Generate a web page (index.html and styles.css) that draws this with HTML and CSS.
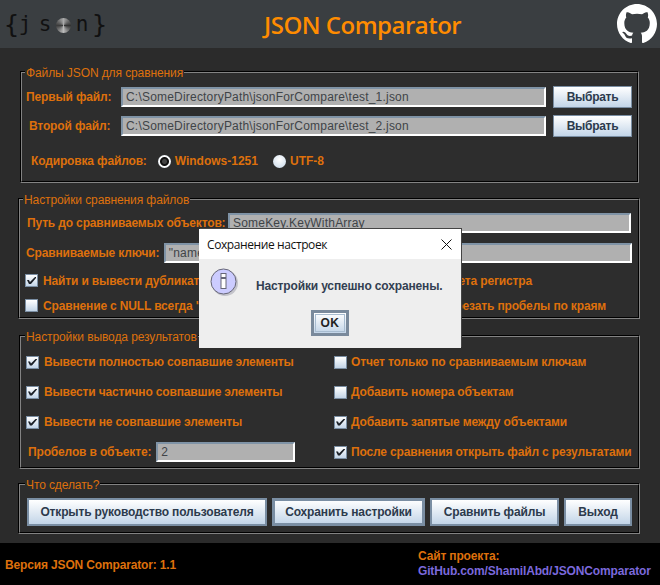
FILE: index.html
```html
<!DOCTYPE html>
<html lang="ru">
 <head>
  <meta charset="utf-8"/>
  <title>JSON Comparator</title>
  <link rel="stylesheet" href="styles.css">
 </head>
 <body>
	<div id="app">
		<header>
			<div class="logo">
				<span class="brace">{</span><span>j</span><span class="logo-s">s</span><i class="logo-o"></i><span class="logo-n">n</span><span class="brace brace-end">}</span>
			</div>
			<h1>JSON Comparator</h1>
			<svg class="github" viewBox="0 0 16 16" aria-label="GitHub">
				<path fill="#fff" d="M8 0C3.58 0 0 3.58 0 8c0 3.54 2.29 6.53 5.47 7.59.4.07.55-.17.55-.38 0-.19-.01-.82-.01-1.49-2.01.37-2.53-.49-2.69-.94-.09-.23-.48-.94-.82-1.13-.28-.15-.68-.52-.01-.53.63-.01 1.08.58 1.23.82.72 1.21 1.87.87 2.33.66.07-.52.28-.87.51-1.07-1.78-.2-3.64-.89-3.64-3.95 0-.87.31-1.59.82-2.15-.08-.2-.36-1.02.08-2.12 0 0 .67-.21 2.2.82.64-.18 1.32-.27 2-.27.68 0 1.36.09 2 .27 1.53-1.04 2.2-.82 2.2-.82.44 1.1.16 1.92.08 2.12.51.56.82 1.27.82 2.15 0 3.07-1.87 3.75-3.65 3.95.29.25.54.73.54 1.48 0 1.07-.01 1.93-.01 2.2 0 .21.15.46.55.38A8.013 8.013 0 0016 8c0-4.42-3.58-8-8-8z"/>
			</svg>
		</header>

		<main>
			<fieldset class="panel panel-files">
				<legend>Файлы JSON для сравнения</legend>
				<div class="row row-file">
					<label class="lbl lbl-first">Первый файл:</label>
					<div class="field field-file">C:\SomeDirectoryPath\jsonForCompare\test_1.json</div>
					<button class="btn btn-pick">Выбрать</button>
				</div>
				<div class="row row-file">
					<label class="lbl lbl-second">Второй файл:</label>
					<div class="field field-file">C:\SomeDirectoryPath\jsonForCompare\test_2.json</div>
					<button class="btn btn-pick">Выбрать</button>
				</div>
				<div class="row row-enc">
					<span class="lbl">Кодировка файлов:</span>
					<span class="radio radio-on"></span>
					<span class="lbl lbl-wide">Windows-1251</span>
					<span class="radio radio-utf"></span>
					<span class="lbl lbl-wide">UTF-8</span>
				</div>
			</fieldset>

			<fieldset class="panel panel-compare">
				<legend>Настройки сравнения файлов</legend>
				<div class="row row-path">
					<label class="lbl">Путь до сравниваемых объектов:</label>
					<div class="field field-path">SomeKey.KeyWithArray</div>
				</div>
				<div class="row row-keys">
					<label class="lbl">Сравниваемые ключи:</label>
					<div class="field field-keys">"name"</div>
				</div>
				<div class="row row-check">
					<span class="check check-on"></span>
					<span class="lbl">Найти и вывести дубликаты</span>
					<span class="lbl lbl-end">учета регистра</span>
				</div>
				<div class="row row-check">
					<span class="check"></span>
					<span class="lbl">Сравнение с NULL всегда 'true'</span>
					<span class="lbl lbl-end lbl-trim">Обрезать пробелы по краям</span>
				</div>
			</fieldset>

			<fieldset class="panel panel-output">
				<legend>Настройки вывода результатов</legend>
				<div class="cols">
					<div class="col">
						<div class="opt"><span class="check check-on"></span><span class="lbl">Вывести полностью совпавшие элементы</span></div>
						<div class="opt"><span class="check check-on"></span><span class="lbl">Вывести частично совпавшие элементы</span></div>
						<div class="opt"><span class="check check-on"></span><span class="lbl">Вывести не совпавшие элементы</span></div>
						<div class="opt opt-spaces"><span class="lbl">Пробелов в объекте:</span><div class="field field-spaces">2</div></div>
					</div>
					<div class="col">
						<div class="opt"><span class="check"></span><span class="lbl">Отчет только по сравниваемым ключам</span></div>
						<div class="opt"><span class="check"></span><span class="lbl">Добавить номера объектам</span></div>
						<div class="opt"><span class="check check-on"></span><span class="lbl">Добавить запятые между объектами</span></div>
						<div class="opt"><span class="check check-on"></span><span class="lbl">После сравнения открыть файл с результатами</span></div>
					</div>
				</div>
			</fieldset>

			<fieldset class="panel panel-actions">
				<legend>Что сделать?</legend>
				<div class="actions">
					<button class="btn btn-guide">Открыть руководство пользователя</button>
					<button class="btn btn-save">Сохранить настройки</button>
					<button class="btn btn-compare">Сравнить файлы</button>
					<button class="btn btn-exit">Выход</button>
				</div>
			</fieldset>
		</main>

		<footer>
			<div class="version">Версия JSON Comparator: 1.1</div>
			<div class="site">
				<div>Сайт проекта:</div>
				<a href="#none">GitHub.com/ShamilAbd/JSONComparator</a>
			</div>
		</footer>

		<div class="dialog">
			<div class="dialog-title">
				<span>Сохранение настроек</span>
				<svg class="dialog-close" viewBox="0 0 11 11"><path d="M.5.5l10 10M10.5.5l-10 10" stroke="#111" fill="none"/></svg>
			</div>
			<div class="dialog-body">
				<div class="dialog-msg">
					<svg class="info" viewBox="0 0 30 30">
						<circle cx="15" cy="15" r="13" fill="#9a9aa8" opacity=".5"/>
						<circle cx="13.5" cy="13.5" r="12.5" fill="#ccf" stroke="#667" stroke-width="1"/>
						<rect x="11" y="5.500" width="5" height="4" fill="#fff" stroke="#667"/>
						<rect x="11" y="10.500" width="5" height="10" fill="#fff" stroke="#667"/>
					</svg>
					<p>Настройки успешно сохранены.</p>
				</div>
				<button class="btn btn-ok"><span>OK</span></button>
			</div>
		</div>
	</div>
 </body>
</html>
```

FILE: styles.css
```css
*{margin:0; padding:0; box-sizing:border-box;}
html,body{height:100%; background-color:#2b2b2b;}
body{font-family:"Liberation Sans", Arial, sans-serif; font-size:12px; color:#de700c; overflow:hidden;}

#app{position:relative; width:660px; height:585px; display:flex; flex-direction:column;}

/* header */
header{height:48px; background-color:#3a3e41; display:flex; align-items:center; position:relative; overflow:hidden;}
.logo{width:264px; padding-left:4px; display:flex; align-items:center; font-family:"DejaVu Sans Mono", monospace; font-size:21px; color:#111;}
.logo span{width:16px; text-align:center;}
.logo .brace{font-size:25px; width:13px;}
.logo .logo-s{margin-left:4px;}
.logo .logo-n{margin-left:3px;}
.logo .brace-end{margin-left:2px;}
.logo-o{display:block; flex:none; width:15px; height:15px; margin:3px 0 0 3px; border-radius:50%; background:conic-gradient(#aaa,#333 25%,#bbb 50%,#3c3c3c 75%,#aaa);}
h1{font-family:"Open Sans", sans-serif; font-size:24px; font-weight:600; letter-spacing:-.5px; color:#ff8c00; white-space:nowrap;}
.github{position:absolute; left:617px; top:4px; width:40px; height:40px;}

/* panels */
main{flex:1; padding:15px 20px 0 18px;}
.panel{border:2px groove #2f2f2f; background-color:#2d2d2d; padding:0 6px; min-width:0;}
.panel legend{margin-left:-1px; padding:2px 1px 0; font-size:12px; line-height:16px; letter-spacing:-.1px;}
.panel-files{height:120px; margin:0 1px 7px 2px; padding:5px 4px 0;}
.panel-compare{height:129px; margin-bottom:8px; padding-top:5px;}
.panel-compare legend{margin-left:-3px;}
.panel-output{height:142px; margin:0 0 6px 1px; padding:2px 6px 0 5px;}
.panel-actions{height:59px; padding-left:7px;}
.panel-actions legend{margin-left:-2px;}

.lbl{font-size:12px; font-weight:bold; letter-spacing:-.15px; white-space:nowrap;}
.lbl-wide{letter-spacing:0;}
.row{display:flex; align-items:center;}

.field{height:20px; line-height:17px; padding-left:3px; background-color:#b0b0b0; color:#404448; font-size:12px; letter-spacing:.2px; white-space:nowrap; overflow:hidden;
	border:2px solid; border-color:#7f93a6 #fff #fff #7f93a6;}

.btn{font-family:"Liberation Sans", Arial, sans-serif; font-size:12px; font-weight:bold; letter-spacing:-.15px; color:#2c3a4c; border:1px solid #7a8ea3; background:linear-gradient(#fff,#c3d5e8);}

/* files */
.row-file{height:22px; margin-bottom:7px;}
.lbl-first{width:95px;}
.lbl-second{width:95px; padding-left:3px;}
.field-file{width:425px;}
.btn-pick{width:79px; height:22px; margin-left:7px; letter-spacing:-.3px;}
.row-enc{height:14px; margin-top:17px; padding-left:5px;}
.radio{flex:none; width:13px; height:13px; border-radius:50%; background:radial-gradient(circle at 50% 35%,#fff,#c5d6e8); margin:0 4px 0 11px;}
.radio-on{background:radial-gradient(circle,#444 0 2px,#111 3px 4px,#fff 5px,#c5d6e8);}
.radio-utf{margin-left:15px;}

/* compare */
.row-path{height:20px; padding-left:1px;}
.row-path .lbl{width:201px;}
.field-path{width:403px;}
.row-keys{height:20px; margin-top:10px;}
.row-keys .lbl{width:138px;}
.field-keys{width:469px;}
.row-check{height:13px; margin-top:12px;}
.row-keys + .row-check{margin-top:11px;}
.lbl-end{margin-left:auto; margin-right:100px;}
.lbl-trim{margin-right:26px;}

.check{flex:none; display:inline-block; position:relative; width:13px; height:13px; border:1px solid #7a8ea3; background:linear-gradient(#fff,#c3d5e8);}
.check-on:after{content:""; position:absolute; left:1px; top:2px; width:9px; height:7px; background-color:#1b2027; clip-path:polygon(0 43%,22% 43%,33% 71%,89% 0,100% 0,100% 14%,44% 100%,22% 100%);}
.row-check .check{margin:0 5px 0 -1px;}

/* output */
.cols{display:flex;}
.col{flex:none; width:308px;}
.opt{height:30px; display:flex; align-items:center;}
.opt .check{margin-right:4px;}
.col:first-child .check{margin-right:5px;}
.opt-spaces{padding-left:2px;}
.field-spaces{width:139px; margin-left:5px;}

/* actions */
.actions{display:flex; gap:5px; padding-top:5px;}
.actions .btn{height:28px; border-width:2px;}
.btn-guide{width:240px;}
.btn-save{width:153px; outline:1px solid #7a8ea3; outline-offset:-3px;}
.btn-compare{width:129px;}
.btn-exit{width:68px;}

/* footer */
footer{height:42px; background-color:#000; display:flex; align-items:center; justify-content:space-between; padding:0 10px 0 5px; font-weight:bold; letter-spacing:-.15px;}
.version{padding-top:2px;}
.site{line-height:15px; width:232px;}
.site a{color:#7b69dc; text-decoration:none;}

/* dialog */
.dialog{position:absolute; left:199px; top:229px; width:262px; height:119px; background-color:#eee; box-shadow:1px -1px 0 #444;}
.dialog-title{height:30px; background-color:#fff; display:flex; align-items:center; justify-content:space-between; padding:0 8px; font-family:"Open Sans", sans-serif; font-size:12px; letter-spacing:-.4px; color:#111;}
.dialog-close{width:11px; height:11px; margin-right:1px;}
.dialog-msg{display:flex; align-items:flex-start; height:51px; padding:9px 0 0 11px;}
.dialog-msg p{margin-left:16px; font-weight:bold; letter-spacing:-.15px; color:#333f52; padding-top:11px;}
.info{flex:none; width:30px; height:30px;}
.btn-ok{display:block; width:38px; height:26px; margin:0 auto; border:3px solid #7a8a9c; padding:1px; letter-spacing:.4px;}
.btn-ok span{display:block; height:100%; border:1px solid #a8bcd0; line-height:16px; color:#222;}
```
